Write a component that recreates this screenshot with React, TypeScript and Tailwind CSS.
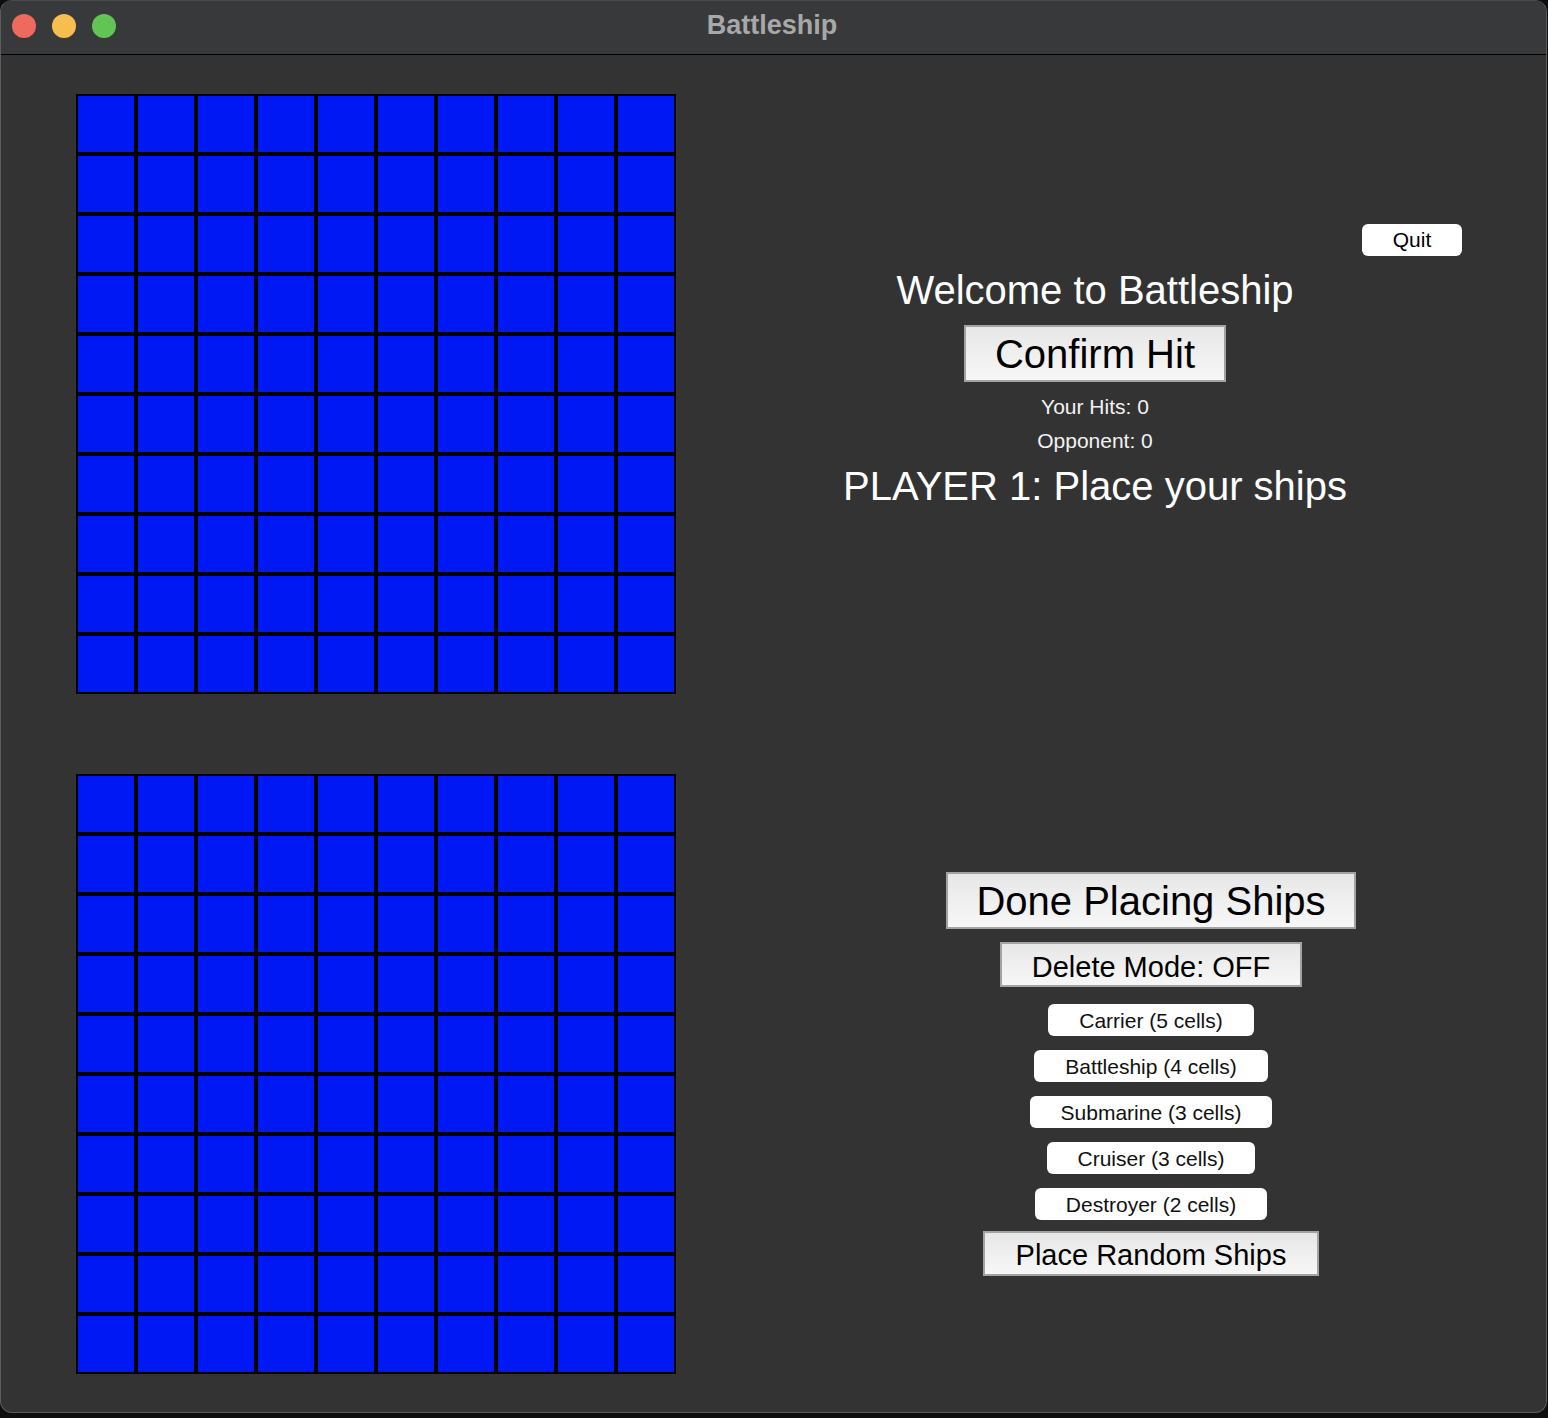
const ships = [
  { name: "Carrier (5 cells)", w: "w-[206px]" },
  { name: "Battleship (4 cells)", w: "w-[234px]" },
  { name: "Submarine (3 cells)", w: "w-[242px]" },
  { name: "Cruiser (3 cells)", w: "w-[208px]" },
  { name: "Destroyer (2 cells)", w: "w-[232px]" },
];

function Board() {
  return (
    <div className="grid grid-cols-10 w-[600px]">
      {Array.from({ length: 100 }).map((_, i) => (
        <div key={i} className="h-[60px] border-2 border-black bg-[#0019f4]" />
      ))}
    </div>
  );
}

function BigButton({ label, className }: { label: string; className: string }) {
  return (
    <button
      className={`flex items-center justify-center border-2 border-[#a3a3a3] bg-linear-to-b from-[#e7e7e7] to-[#f7f7f7] text-black leading-none ${className}`}
    >
      {label}
    </button>
  );
}

function ShipButton({ label, w }: { label: string; w: string }) {
  return (
    <button
      className={`flex items-center justify-center h-[32px] rounded-[6px] bg-white text-[21px] leading-[21px] text-[#111] ${w}`}
    >
      {label}
    </button>
  );
}

export default function App() {
  return (
    <div
      className="w-[1548px] h-[1418px] bg-[#0e0e0e]"
      style={{ fontFamily: '"Liberation Sans", Arial, sans-serif' }}
    >
      <div className="w-[1547px] h-[1413px] rounded-[12px] overflow-hidden bg-[#333333] border border-[#5c5c5c] border-t-[#4a4a4a] flex flex-col">
        {/* title bar */}
        <div className="relative h-[54px] shrink-0 bg-[#38393b] border-b border-black flex items-center justify-center">
          <div className="absolute left-[11px] top-[13px] flex gap-[16px]">
            <div className="w-[24px] h-[24px] rounded-full bg-[#ee6a5f]" />
            <div className="w-[24px] h-[24px] rounded-full bg-[#f5be4f]" />
            <div className="w-[24px] h-[24px] rounded-full bg-[#61c454]" />
          </div>
          <span className="text-[27px] font-bold text-[#a8a8a8] leading-none pb-[5px] pr-[3px]">Battleship</span>
        </div>

        {/* body */}
        <div className="flex flex-1">
          <div className="flex flex-col gap-[80px] pl-[75px] pt-[39px]">
            <Board />
            <Board />
          </div>

          <div className="flex flex-col w-[870px]">
            {/* top panel */}
            <div className="flex flex-col items-center w-[838px]">
              <div className="self-stretch flex justify-end pr-[52px] mt-[169px]">
                <button className="w-[100px] h-[32px] rounded-[6px] bg-white text-[21px] leading-[21px] text-black pb-[1px]">
                  Quit
                </button>
              </div>
              <div className="mt-[14px] text-[40px] leading-[40px] text-white">Welcome to Battleship</div>
              <BigButton label="Confirm Hit" className="mt-[15px] w-[262px] h-[57px] text-[40px]" />
              <div className="mt-[15px] text-[21px] leading-[20px] text-[#f2f2f2]">Your Hits: 0</div>
              <div className="mt-[14px] text-[21px] leading-[20px] text-[#f2f2f2]">Opponent: 0</div>
              <div className="mt-[15px] text-[40px] leading-[40px] text-white">PLAYER 1: Place your ships</div>
            </div>

            {/* bottom panel */}
            <div className="flex flex-col items-center pl-[80px] mt-[366px]">
              <BigButton label="Done Placing Ships" className="w-[410px] h-[57px] text-[40px]" />
              <BigButton label="Delete Mode: OFF" className="mt-[13px] w-[302px] h-[45px] text-[29px] pt-[5px]" />
              <div className="mt-[17px] flex flex-col items-center gap-[14px]">
                {ships.map((s) => (
                  <ShipButton key={s.name} label={s.name} w={s.w} />
                ))}
              </div>
              <BigButton label="Place Random Ships" className="mt-[11px] w-[336px] h-[45px] text-[29px] pt-[3px]" />
            </div>
          </div>
        </div>
      </div>
    </div>
  );
}
